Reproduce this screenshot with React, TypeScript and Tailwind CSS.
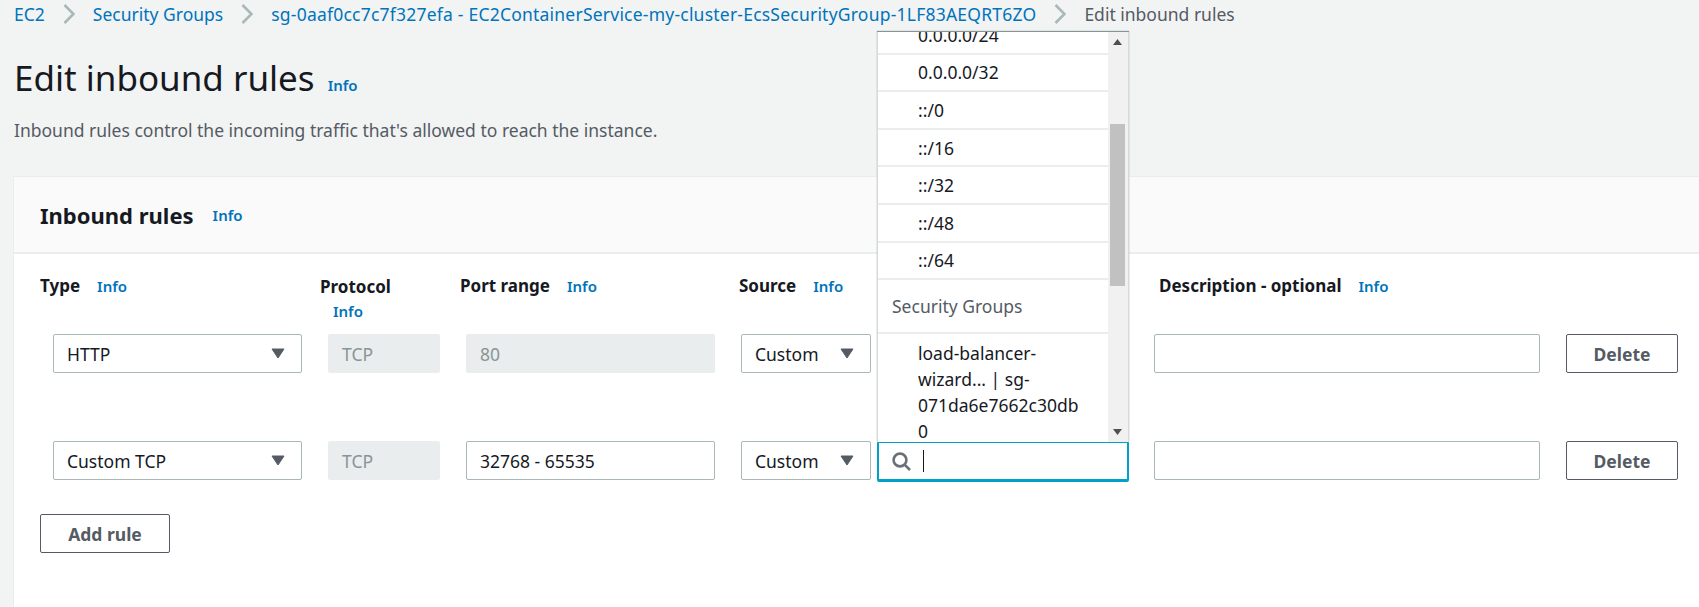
const FONT = "font-['Noto_Sans','Liberation_Sans',sans-serif]";

const Info = ({ className = '' }: { className?: string }) => (
  <a className={`text-[15px] font-semibold text-[#0073bb] ${className}`}>Info</a>
);

const Crumb = ({ label, className = '' }: { label: string; className?: string }) => (
  <>
    <a className={`text-[#0073bb] ${className}`}>{label}</a>
    <svg className="mx-[18px] h-[20px] w-[12px] shrink-0" viewBox="0 0 12 20" fill="none" stroke="#aab7b8" strokeWidth="2.5">
      <path d="M1.5 1l9 9-9 9" />
    </svg>
  </>
);

const Caret = () => (
  <svg className="h-[11px] w-[14px] shrink-0" viewBox="0 0 14 11" fill="#545b64" stroke="#545b64" strokeLinejoin="round">
    <path d="M1 1h12L7 10z" />
  </svg>
);

const Select = ({ value, className = '' }: { value: string; className?: string }) => (
  <div className={`flex h-[39px] items-center justify-between rounded-[2px] border border-[#aab7b8] bg-white pl-[13px] pr-[16px] text-[#16191f] ${className}`}>
    <span>{value}</span>
    <Caret />
  </div>
);

const TextBox = ({ value = '', disabled = false, className = '' }: { value?: string; disabled?: boolean; className?: string }) => (
  <div
    className={`flex h-[39px] items-center rounded-[2px] border pl-[13px] ${
      disabled ? 'border-[#eaeded] bg-[#eaeded] text-[#879596]' : 'border-[#aab7b8] bg-white text-[#16191f]'
    } ${className}`}
  >
    {value}
  </div>
);

const OutlineButton = ({ label, className = '' }: { label: string; className?: string }) => (
  <button className={`h-[39px] rounded-[2px] border border-[#545b64] bg-white text-center font-bold text-[#545b64] ${className}`}>
    {label}
  </button>
);

const Option = ({ label }: { label: string }) => (
  <div className="flex h-[37.6px] items-center border-b-2 border-[#eaeded] pl-[40px] text-[#16191f]">{label}</div>
);

const ColumnLabel = ({ label, className = '' }: { label: string; className?: string }) => (
  <div className={`flex items-center gap-[17px] ${className}`}>
    <span className="text-[17px] font-bold text-[#16191f]">{label}</span>
    <Info />
  </div>
);

const SourceDropdown = () => (
  <div className="absolute left-[877px] top-[32px] flex h-[410px] w-[252px] overflow-hidden border-x border-[#d5dbdb] bg-white shadow-[0_-1px_1px_#879596]">
    <div className="min-w-0 flex-1 overflow-hidden">
      <div className="-mt-[15px]">
        <Option label="0.0.0.0/24" />
        {['0.0.0.0/32', '::/0', '::/16', '::/32', '::/48', '::/64'].map((v) => (
          <Option key={v} label={v} />
        ))}
        <div className="flex h-[54px] items-center border-b-2 border-[#eaeded] pl-[14px] text-[#545b64]">Security Groups</div>
        <div className="pl-[40px] pt-[6px] leading-[26px] text-[#16191f]">
          load-balancer-
          <br />
          wizard... | sg-
          <br />
          071da6e7662c30db
          <br />0
        </div>
      </div>
    </div>
    <div className="relative w-[20px] shrink-0 bg-[#f1f1f1]">
      <div className="absolute left-[2px] top-[92px] h-[162px] w-[15px] bg-[#c1c1c1]" />
      <svg className="absolute left-[5px] top-[7px] h-[6px] w-[9px]" viewBox="0 0 9 6" fill="#505050">
        <path d="M4.5 0L9 6H0z" />
      </svg>
      <svg className="absolute bottom-[7px] left-[5px] h-[6px] w-[9px]" viewBox="0 0 9 6" fill="#505050">
        <path d="M0 0h9L4.5 6z" />
      </svg>
    </div>
  </div>
);

const App = () => {
  return (
    <div className={`relative h-[607px] w-[1699px] overflow-hidden bg-[#f2f3f3] pl-[14px] text-[17.5px] leading-[24px] ${FONT}`}>
      <nav className="flex h-[28px] items-center whitespace-nowrap">
        <Crumb label="EC2" />
        <Crumb label="Security Groups" />
        <Crumb label="sg-0aaf0cc7c7f327efa - EC2ContainerService-my-cluster-EcsSecurityGroup-1LF83AEQRT6ZO" className="tracking-[0.22px]" />
        <span className="text-[#545b64]">Edit inbound rules</span>
      </nav>

      <div className="mt-[28px] flex items-baseline gap-[13px]">
        <h1 className="text-[35px] leading-[44px] text-[#16191f]">Edit inbound rules</h1>
        <Info />
      </div>
      <p className="mt-[18px] text-[#545b64]">Inbound rules control the incoming traffic that's allowed to reach the instance.</p>

      <section className="-ml-px mt-[34px] h-[500px] w-[1700px] border border-[#eaeded] bg-white">
        <div className="flex h-[77px] items-center gap-[19px] border-b-2 border-[#eaeded] bg-[#fafafa] pl-[26px]">
          <h2 className="text-[22px] font-bold text-[#16191f]">Inbound rules</h2>
          <Info />
        </div>

        <div className="grid grid-cols-[280px_140px_279px_420px_1fr] items-start pl-[26px] pt-[20px]">
          <ColumnLabel label="Type" />
          <div>
            <span className="text-[17px] font-bold text-[#16191f]">Protocol</span>
            <Info className="ml-[13px] block" />
          </div>
          <ColumnLabel label="Port range" />
          <ColumnLabel label="Source" />
          <ColumnLabel label="Description - optional" />
        </div>

        <div className="grid grid-cols-[275px_138px_275px_413px_412px_112px] gap-y-[68px] pl-[39px] pt-[11px]">
          <Select value="HTTP" className="w-[249px]" />
          <TextBox value="TCP" disabled className="w-[112px]" />
          <TextBox value="80" disabled className="w-[249px]" />
          <Select value="Custom" className="w-[130px]" />
          <TextBox className="w-[386px]" />
          <OutlineButton label="Delete" />

          <Select value="Custom TCP" className="w-[249px]" />
          <TextBox value="TCP" disabled className="w-[112px]" />
          <TextBox value="32768 - 65535" className="w-[249px]" />
          <div className="flex gap-[6px]">
            <Select value="Custom" className="w-[130px]" />
            <div className="flex h-[41px] w-[252px] items-center gap-[12px] rounded-[2px] border-2 border-b-[3px] border-[#00a1c9] bg-white pl-[13px]">
              <svg className="h-[19px] w-[19px] shrink-0" viewBox="0 0 19 19" fill="none" stroke="#687078" strokeWidth="2.6">
                <circle cx="8" cy="8" r="6.4" />
                <path d="M12.8 12.8l5.2 5.2" />
              </svg>
              <span className="h-[22px] w-px bg-[#16191f]" />
            </div>
          </div>
          <TextBox className="w-[386px]" />
          <OutlineButton label="Delete" />
        </div>

        <OutlineButton label="Add rule" className="ml-[26px] mt-[32px] w-[130px]" />
      </section>

      <SourceDropdown />
    </div>
  );
};

export default App;
